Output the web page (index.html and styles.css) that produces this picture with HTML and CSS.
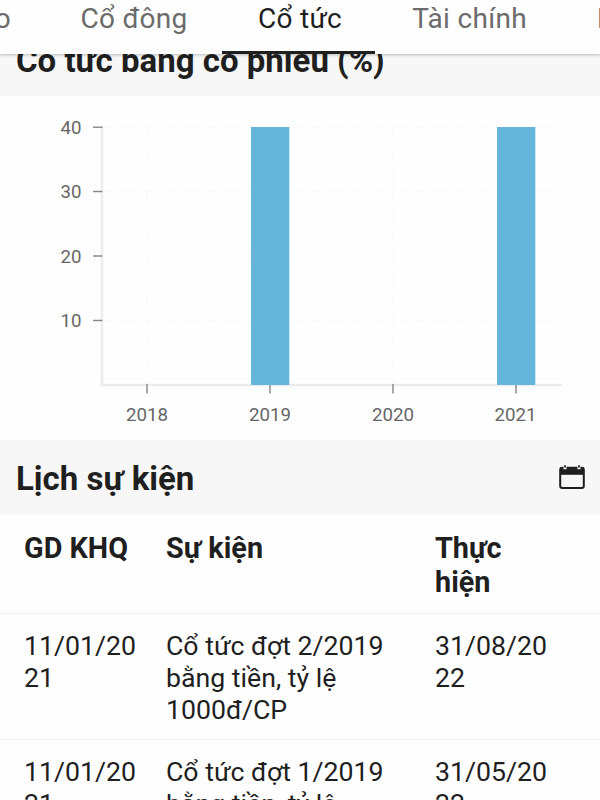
FILE: index.html
```html
<!DOCTYPE html>
<html lang="vi">
<head>
    <meta charset="UTF-8">
    <meta name="viewport" content="width=device-width, initial-scale=1.0">
    <title>Cổ tức</title>
    <link rel="stylesheet" href="styles.css">
</head>
<body>
    <nav class="tabs">
        <a class="tab tab-first">Báo cáo</a>
        <a class="tab tab-holders">Cổ đông</a>
        <a class="tab active">Cổ tức</a>
        <a class="tab tab-finance">Tài chính</a>
        <a class="tab tab-last">Hồ sơ</a>
    </nav>

    <main class="content">
        <section>
            <div class="section-header">
                <h2>Cổ tức bằng cổ phiếu (%)</h2>
            </div>
            <svg class="chart" width="600" height="344" viewBox="0 96 600 344">
                <g class="grid">
                    <path d="M104 127.5H562M104 191.5H562M104 256H562M104 320.5H562"/>
                    <path d="M147 127V384M270 127V384M393 127V384M516 127V384"/>
                </g>
                <path class="axis" d="M102 126V385H562"/>
                <g class="bars">
                    <rect x="251" y="127" width="38.3" height="258"/>
                    <rect x="497" y="127" width="38.3" height="258"/>
                </g>
                <path class="ticks" d="M93 127.2H102.5M93 191.5H102.5M93 256H102.5M93 320.5H102.5M147 384V393.5M270 385V393.5M393 384V393.5M516 385V393.5"/>
                <g class="labels labels-y">
                    <text x="81.5" y="134">40</text>
                    <text x="81.5" y="198">30</text>
                    <text x="81.5" y="263">20</text>
                    <text x="81.5" y="327">10</text>
                </g>
                <g class="labels labels-x">
                    <text x="147" y="421">2018</text>
                    <text x="270" y="421">2019</text>
                    <text x="393" y="421">2020</text>
                    <text x="515.5" y="421">2021</text>
                </g>
            </svg>
        </section>

        <section>
            <div class="section-header">
                <h2>Lịch sự kiện</h2>
                <svg class="icon-calendar" width="28" height="26" viewBox="0 0 28 26">
                    <rect x="2.2" y="3.7" width="23.6" height="20.3" rx="2" fill="none" stroke="#1f1f1f" stroke-width="2"/>
                    <path d="M2 3.5h24v7.3H2z" fill="#1f1f1f"/>
                    <path d="M7 2v3.2M21 2v3.2" stroke="#f7f7f7" stroke-width="3"/>
                    <path d="M7 1.2v2.2M21 1.2v2.2" stroke="#1f1f1f" stroke-width="1.8"/>
                </svg>
            </div>
            <table class="events">
                <thead>
                    <tr>
                        <th class="col-date">GD KHQ</th>
                        <th class="col-event">Sự kiện</th>
                        <th class="col-done">Thực hiện</th>
                    </tr>
                </thead>
                <tbody>
                    <tr>
                        <td>11/01/2021</td>
                        <td>Cổ tức đợt 2/2019 bằng tiền, tỷ lệ 1000đ/CP</td>
                        <td>31/08/2022</td>
                    </tr>
                    <tr>
                        <td>11/01/2021</td>
                        <td>Cổ tức đợt 1/2019 bằng tiền, tỷ lệ 1000đ/CP</td>
                        <td>31/05/2022</td>
                    </tr>
                </tbody>
            </table>
        </section>
    </main>
</body>
</html>
```

FILE: styles.css
```css
* {
    box-sizing: border-box;
}
body {
    margin: 0;
    height: 800px;
    overflow: hidden;
    display: flex;
    flex-direction: column;
    background-color: #fefefe;
    color: #1f1f1f;
    font-family: Roboto, sans-serif;
}
.tabs {
    display: flex;
    flex: none;
    height: 54px;
    background-color: #fefefe;
    box-shadow: 0 1px 3px rgba(0, 0, 0, 0.25);
    z-index: 1;
}
.tab {
    display: flex;
    justify-content: center;
    flex: none;
    height: 54px;
    padding-top: 2px;
    font-size: 28px;
    line-height: 34px;
    letter-spacing: 0.3px;
    white-space: nowrap;
    color: #6b6b6b;
}
.tab-first {
    width: 46px;
    justify-content: flex-end;
    padding-right: 35px;
}
.tab-holders {
    width: 176px;
}
.tab.active {
    width: 153px;
    padding-left: 3px;
    color: #1f1f1f;
    border-bottom: 3px solid #1f1f1f;
}
.tab-finance {
    width: 189px;
}
.tab-last {
    width: 36px;
    justify-content: flex-start;
    padding-left: 33px;
    overflow: hidden;
}
.content {
    flex: 1;
    min-height: 0;
    overflow: hidden;
}
.content section:first-child {
    margin-top: -32px;
}
.section-header {
    display: flex;
    align-items: center;
    justify-content: space-between;
    height: 74px;
    padding: 4px 14px 0 16px;
    background-color: #f7f7f7;
}
h2 {
    margin: 0;
    font-size: 33px;
    line-height: 38px;
    font-weight: 700;
}
.icon-calendar {
    margin-bottom: 4px;
}
.chart {
    display: block;
}
.grid {
    fill: none;
    stroke: #f8f8f8;
    stroke-dasharray: 8 5;
}
.axis {
    fill: none;
    stroke: #ececec;
    stroke-width: 2.5;
}
.bars {
    fill: #66b5da;
}
.ticks {
    fill: none;
    stroke: #8c8c8c;
    stroke-width: 1.5;
}
.labels {
    fill: #666;
    font-size: 18.7px;
}
.labels-y {
    text-anchor: end;
}
.labels-x {
    text-anchor: middle;
}
.events {
    width: 600px;
    table-layout: fixed;
    border-collapse: collapse;
}
.events th,
.events td {
    padding: 17px 0 13px 24px;
    text-align: left;
    vertical-align: top;
    border-bottom: 1px solid #f3f3f3;
}
.events th {
    padding-bottom: 14px;
    font-size: 28.8px;
    line-height: 34px;
    font-weight: 700;
}
.events td {
    height: 126px;
    font-size: 26.7px;
    line-height: 31.8px;
    word-break: break-word;
}
.events th:last-child,
.events td:last-child {
    padding-right: 48px;
}
.col-date {
    width: 142px;
}
.col-event {
    width: 269px;
}
```
